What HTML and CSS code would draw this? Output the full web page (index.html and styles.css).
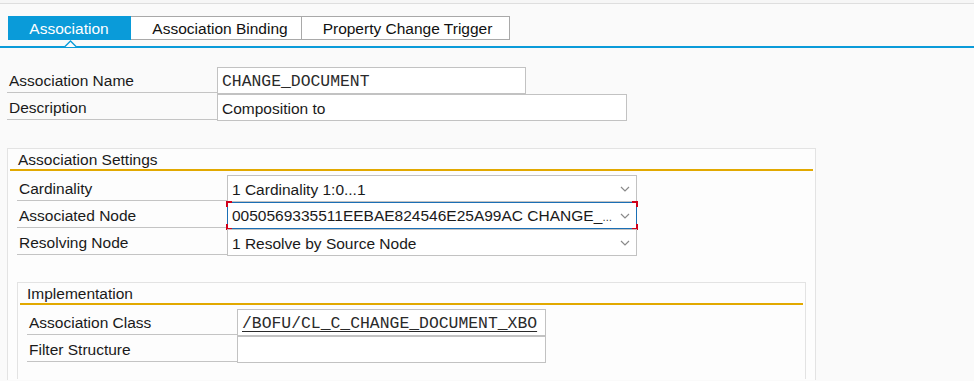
FILE: index.html
```html
<!DOCTYPE html>
<html lang="en">
<head>
    <meta charset="UTF-8">
    <title>Association</title>
    <link rel="stylesheet" href="styles.css">
</head>
<body>
    <div class="topbar"></div>

    <nav class="tabs">
        <div class="tab tab-first active">Association</div>
        <div class="tab tab-second">Association Binding</div>
        <div class="tab tab-third">Property Change Trigger</div>
    </nav>
    <div class="tab-rule">
        <svg class="caret" width="13" height="7" viewBox="0 0 13 7">
            <polyline points="0.5,7 6.5,1 12.5,7" fill="#fcfcfc" stroke="#0a9bd9" stroke-width="1.4"/>
        </svg>
    </div>

    <main class="form">
        <div class="row">
            <div class="label">Association Name</div>
            <div class="input mono w-short">CHANGE_DOCUMENT</div>
        </div>
        <div class="row">
            <div class="label">Description</div>
            <div class="input w-long">Composition to</div>
        </div>

        <section class="group settings">
            <div class="group-title">Association Settings</div>
            <div class="group-rows">
                <div class="row">
                    <div class="label">Cardinality</div>
                    <div class="input select w-long">
                        <span class="value">1 Cardinality 1:0...1</span>
                        <svg class="chevron" width="10" height="6" viewBox="0 0 10 6"><polyline points="1,1 5,5 9,1" fill="none" stroke="#8a8a8a" stroke-width="1.2"/></svg>
                    </div>
                </div>
                <div class="row">
                    <div class="label">Associated Node</div>
                    <div class="input select w-long focused">
                        <span class="value">0050569335511EEBAE824546E25A99AC CHANGE_<small class="dots">…</small></span>
                        <svg class="chevron" width="10" height="6" viewBox="0 0 10 6"><polyline points="1,1 5,5 9,1" fill="none" stroke="#8a8a8a" stroke-width="1.2"/></svg>
                        <span class="focus-marks"></span>
                    </div>
                </div>
                <div class="row">
                    <div class="label">Resolving Node</div>
                    <div class="input select w-long">
                        <span class="value">1 Resolve by Source Node</span>
                        <svg class="chevron" width="10" height="6" viewBox="0 0 10 6"><polyline points="1,1 5,5 9,1" fill="none" stroke="#8a8a8a" stroke-width="1.2"/></svg>
                    </div>
                </div>
            </div>

            <section class="group impl">
                <div class="group-title">Implementation</div>
                <div class="group-rows">
                    <div class="row">
                        <div class="label">Association Class</div>
                        <div class="input mono underline w-short">/BOFU/CL_C_CHANGE_DOCUMENT_XBO</div>
                    </div>
                    <div class="row">
                        <div class="label">Filter Structure</div>
                        <div class="input w-short"></div>
                    </div>
                </div>
            </section>
        </section>
    </main>
</body>
</html>
```

FILE: styles.css
```css
* {
    margin: 0;
    padding: 0;
    box-sizing: border-box;
}

html, body {
    height: 381px;
}

body {
    background: #fafafa;
    color: #1a1a1a;
    font-family: "Liberation Sans", Arial, sans-serif;
    font-size: 15.5px;
    overflow: hidden;
}

.topbar {
    height: 4px;
    background: #f6f6f6;
    border-bottom: 1px solid #dedede;
}

/* tab strip */
.tabs {
    display: flex;
    margin-top: 12px;
    padding-left: 8px;
    height: 24px;
}

.tab {
    display: flex;
    align-items: center;
    justify-content: center;
    padding-top: 1px;
    background: #ffffff;
    border: 1px solid #a9a9a9;
    border-left: none;
    color: #111111;
    line-height: 1;
}

.tab.active {
    background: #0a9bd9;
    border-color: #0a9bd9;
    color: #ffffff;
}

.tab-first { width: 123px; }
.tab-second { width: 171px; padding-left: 8px; }
.tab-third { width: 208px; padding-left: 4px; }

.tab-rule {
    position: relative;
    margin-top: 6px;
    height: 2px;
    background: #0a9bd9;
}

.caret {
    position: absolute;
    left: 64px;
    top: -6px;
    display: block;
}

/* form rows */
.form {
    padding-left: 7px;
    margin-top: 19px;
}

.row {
    display: flex;
    height: 26px;
    margin-bottom: 1px;
}

.label {
    width: 210px;
    height: 26px;
    padding: 1px 0 0 2px;
    line-height: 26px;
    border-bottom: 1px solid #c4c4c4;
    white-space: nowrap;
}

.input {
    position: relative;
    height: 27px;
    padding: 1px 4px 0;
    background: #ffffff;
    border: 1px solid #c2c2c2;
    line-height: 25px;
    white-space: nowrap;
}

.w-short { width: 309px; }
.w-long { width: 410px; }

.mono {
    font-family: "Liberation Mono", "Courier New", monospace;
    font-size: 16.4px;
    color: #2a2a2a;
}

.underline {
    text-decoration: underline;
    text-underline-offset: 3px;
}

.select {
    display: flex;
    align-items: center;
    gap: 6px;
    padding-right: 6px;
}

.select .value {
    flex: 1;
    white-space: nowrap;
}

.dots {
    font-size: 10px;
}

.chevron {
    flex: none;
    display: block;
}

.focused {
    border-color: #1b6fb5;
}

.focus-marks {
    position: absolute;
    inset: -2px;
    pointer-events: none;
    background:
        linear-gradient(#d0021b, #d0021b) left top / 6px 2px no-repeat,
        linear-gradient(#d0021b, #d0021b) left top / 2px 6px no-repeat,
        linear-gradient(#d0021b, #d0021b) right top / 6px 2px no-repeat,
        linear-gradient(#d0021b, #d0021b) right top / 2px 6px no-repeat,
        linear-gradient(#d0021b, #d0021b) left bottom / 6px 2px no-repeat,
        linear-gradient(#d0021b, #d0021b) left bottom / 2px 6px no-repeat,
        linear-gradient(#d0021b, #d0021b) right bottom / 6px 2px no-repeat,
        linear-gradient(#d0021b, #d0021b) right bottom / 2px 6px no-repeat;
}

/* group boxes */
.group {
    background: #fdfdfd;
    border: 1px solid #e3e3e3;
    border-bottom: none;
    padding: 0 2px;
}

.settings {
    width: 809px;
    margin-top: 28px;
    height: 232px;
}

.group-title {
    height: 22px;
    padding: 1px 0 0 8px;
    line-height: 20px;
    border-bottom: 2px solid #e2a900;
}

.group-rows {
    padding: 4px 0 0 7px;
}

.impl {
    width: 789px;
    margin: 27px 0 0 7px;
    height: 97px;
}

.impl .group-title {
    padding-left: 7px;
}
```
